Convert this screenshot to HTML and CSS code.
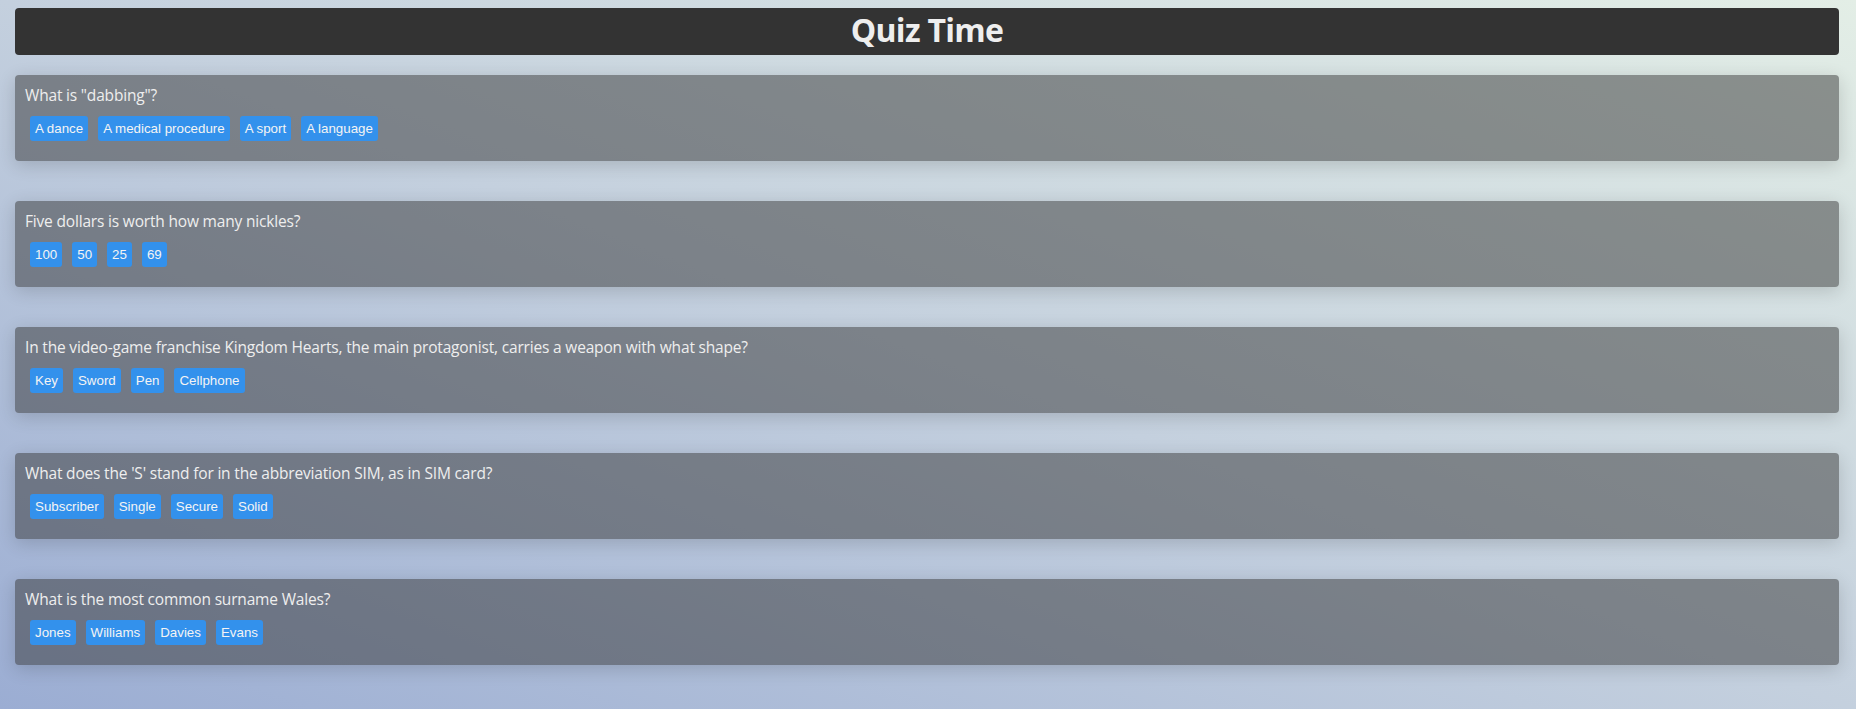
FILE: index.html
```html
<!DOCTYPE html>
<html lang="en">
<head>
<meta charset="utf-8">
<title>Quiz Time</title>
<link rel="stylesheet" href="styles.css">
</head>
<body>
<div class="page">
  <header class="title-bar"><h1 class="title">Quiz Time</h1></header>
  <main class="quiz">
    <section class="card">
      <div class="question">What is "dabbing"?</div>
      <div class="answers">
        <button class="answer">A dance</button>
        <button class="answer">A medical procedure</button>
        <button class="answer">A sport</button>
        <button class="answer">A language</button>
      </div>
    </section>
    <section class="card">
      <div class="question">Five dollars is worth how many nickles?</div>
      <div class="answers">
        <button class="answer">100</button>
        <button class="answer">50</button>
        <button class="answer">25</button>
        <button class="answer">69</button>
      </div>
    </section>
    <section class="card">
      <div class="question">In the video-game franchise Kingdom Hearts, the main protagonist, carries a weapon with what shape?</div>
      <div class="answers">
        <button class="answer">Key</button>
        <button class="answer">Sword</button>
        <button class="answer">Pen</button>
        <button class="answer">Cellphone</button>
      </div>
    </section>
    <section class="card">
      <div class="question">What does the 'S' stand for in the abbreviation SIM, as in SIM card?</div>
      <div class="answers">
        <button class="answer">Subscriber</button>
        <button class="answer">Single</button>
        <button class="answer">Secure</button>
        <button class="answer">Solid</button>
      </div>
    </section>
    <section class="card">
      <div class="question">What is the most common surname Wales?</div>
      <div class="answers">
        <button class="answer">Jones</button>
        <button class="answer">Williams</button>
        <button class="answer">Davies</button>
        <button class="answer">Evans</button>
      </div>
    </section>
  </main>
</div>
</body>
</html>
```
FILE: styles.css
```css
html, body {
  margin: 0;
  padding: 0;
  height: 100%;
}
body {
  background: linear-gradient(to top right, #9badd3 0%, #c4d0de 50%, #e3eee6 100%);
  font-family: "Open Sans", "Noto Sans", sans-serif;
  color: #eeeeee;
  overflow: hidden;
}
.page {
  padding: 8px 17px 0 15px;
  display: flex;
  flex-direction: column;
  gap: 20px;
}
.title-bar {
  background: #333333;
  border-radius: 4px;
  height: 47px;
  box-sizing: border-box;
  padding-bottom: 4px;
}
.title {
  margin: 0;
  font-size: 32px;
  line-height: 43px;
  font-weight: 700;
  letter-spacing: -0.7px;
  text-align: center;
  color: #eeeeee;
}
.quiz {
  display: flex;
  flex-direction: column;
  gap: 40px;
}
.card {
  background: rgba(51, 51, 51, 0.5);
  border-radius: 4px;
  padding: 10px 10px 20px 10px;
  box-shadow: 0 4px 18px rgba(0, 0, 0, 0.16);
}
.question {
  font-size: 15.5px;
  letter-spacing: -0.18px;
  line-height: 21px;
  color: #eeeeee;
}
.answers {
  display: flex;
  gap: 10px;
  margin-top: 10px;
  padding-left: 5px;
}
.answer {
  font-family: "Liberation Sans", Arial, sans-serif;
  font-size: 13.33px;
  line-height: 15px;
  padding: 5px;
  border: none;
  border-radius: 3px;
  background: #3391ec;
  color: #f4f4f4;
  cursor: pointer;
}
```
